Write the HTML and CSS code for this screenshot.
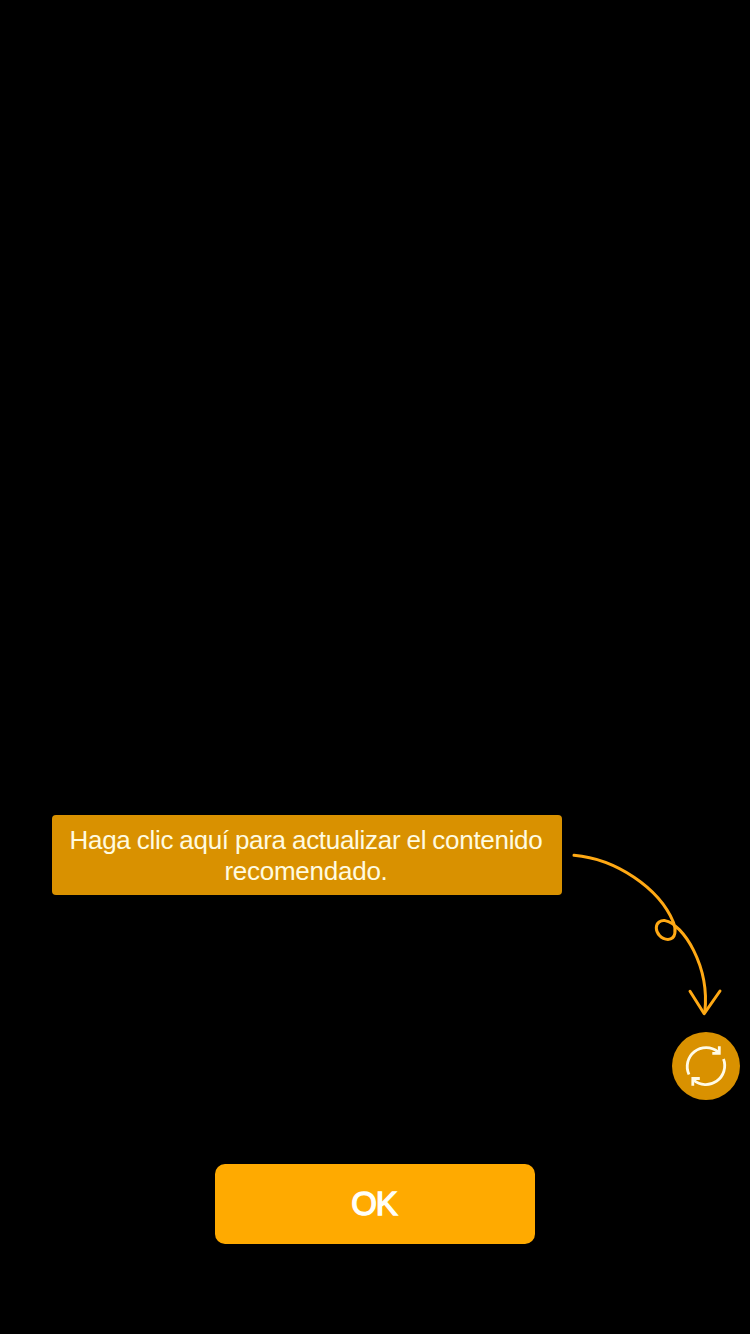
FILE: index.html
```html
<!DOCTYPE html>
<html lang="es">
<head>
<meta charset="utf-8">
<title>Actualizar contenido</title>
<link rel="stylesheet" href="styles.css">
</head>
<body>
<main class="overlay">
  <section class="guide">
    <p class="hint"><span class="hint-first">Haga clic aquí para actualizar el contenido</span><br><span class="hint-second">recomendado.</span></p>
    <div class="pointer">
      <svg class="arrow" viewBox="562 845 188 180" aria-hidden="true">
        <path d="M574 855.3C616 859 659 888 673.3 922C676 929 676.5 939.400 668 939.400C661 939.400 656.300 933 656.300 928C656.300 922 661 920.200 665 920.600C683 924 710 966 704.800 1012"/>
        <path d="M690 991.300L704.200 1013.700L720 991"/>
      </svg>
      <button class="refresh" aria-label="Actualizar">
        <svg class="refresh-icon" viewBox="672 1032 68 68" aria-hidden="true">
          <path d="M689 1074.500A18.900 18.900 0 0 1 718 1051.800M723.500 1059A18.900 18.900 0 0 1 693.500 1080"/>
          <path d="M719.300 1046.300V1053.300H712.300M692.800 1085.800V1078.500H699.800"/>
        </svg>
      </button>
    </div>
  </section>
  <button class="ok">OK</button>
</main>
</body>
</html>
```
FILE: styles.css
```css
body {
  margin: 0;
  background: #000;
  font-family: "Liberation Sans", Arial, sans-serif;
}

button {
  border: 0;
  padding: 0;
  font-family: inherit;
}

.overlay {
  box-sizing: border-box;
  height: 1334px;
  padding-top: 815px;
  display: flex;
  flex-direction: column;
  align-items: center;
}

.guide {
  width: 750px;
  box-sizing: border-box;
  padding-left: 52px;
  display: flex;
  align-items: flex-start;
}

.hint {
  box-sizing: border-box;
  width: 510px;
  height: 80px;
  margin: 0;
  padding: 10px 2px 0 0;
  border-radius: 4px;
  background: #d99100;
  color: #fffbe0;
  font-size: 26px;
  line-height: 31px;
  text-align: center;
  white-space: nowrap;
}

.hint-first {
  letter-spacing: -0.3px;
  word-spacing: -0.7px;
}

.hint-second {
  letter-spacing: -0.25px;
}

.pointer {
  width: 188px;
  padding-top: 30px;
  display: flex;
  flex-direction: column;
  align-items: flex-end;
}

.arrow {
  width: 188px;
  height: 180px;
  fill: none;
  stroke: #ffa914;
  stroke-width: 3;
  stroke-linecap: round;
  stroke-linejoin: round;
}

.refresh {
  width: 68px;
  height: 68px;
  margin: 7px 10px 0 0;
  border-radius: 50%;
  background: #d99100;
}

.refresh-icon {
  display: block;
  width: 68px;
  height: 68px;
  fill: none;
  stroke: #fffbe8;
  stroke-width: 2.8;
}

.ok {
  width: 320px;
  height: 80px;
  margin-top: 64px;
  border-radius: 10px;
  background: #ffaa00;
  color: #fffffa;
  padding-right: 2px;
  font-size: 33px;
  letter-spacing: -1px;
  -webkit-text-stroke: 1.3px #fffffa;
  line-height: 80px;
}
```
